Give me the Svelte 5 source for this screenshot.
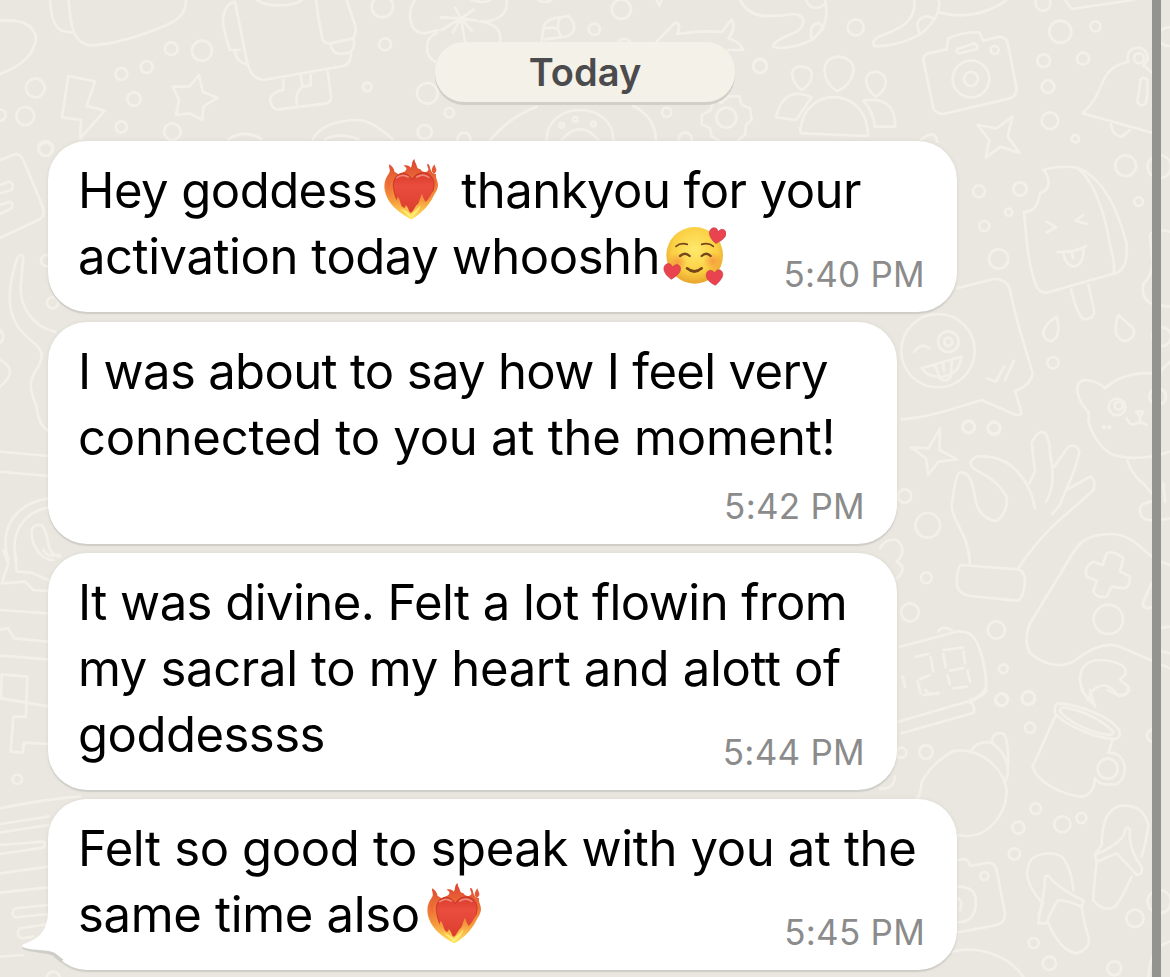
<script>
    const messages = [
        {
            size: 'wide',
            time: '5:40 PM',
            lines: [
                [{ text: 'Hey goddess', ls: -0.52 }, { icon: 'heart' }, { text: 'thankyou for your', ls: -0.54 }],
                [{ text: 'activation today whooshh', ls: -0.45 }, { icon: 'blush' }]
            ]
        },
        {
            size: 'tall',
            time: '5:42 PM',
            lines: [
                [{ text: 'I was about to say how I feel very', ls: -0.66 }],
                [{ text: 'connected to you at the moment!', ls: -0.24 }]
            ]
        },
        {
            size: 'long',
            time: '5:44 PM',
            lines: [
                [{ text: 'It was divine. Felt a lot flowin from', ls: -0.54 }],
                [{ text: 'my sacral to my heart and alott of', ls: -0.34 }],
                [{ text: 'goddessss', ls: -0.5 }]
            ]
        },
        {
            size: 'wide',
            time: '5:45 PM',
            tail: true,
            lines: [
                [{ text: 'Felt so good to speak with you at the', ls: -0.36 }],
                [{ text: 'same time also', ls: -0.33 }, { icon: 'heart' }]
            ]
        }
    ];

    // wallpaper doodles, every sheet is drawn at 3x and placed by its corner
    const sheets = [
        {
            x: 0, y: 0,
            paths: [
                'M0 62Q100 55 108 115Q100 185 0 222',
                'M150 0Q155 80 185 92L215 98',
                'M206 0C210 60 215 130 270 136C350 135 440 100 500 75Q560 50 558 0',
                'M720 150L690 150Q670 90 668 60Q675 10 705 5L740 180Q750 235 790 240L1030 198Q1055 190 1052 160',
                'M705 150Q705 185 742 193',
                'M770 0Q800 18 840 16Q890 15 905 0',
                'M948 0Q955 60 968 120Q975 132 990 130L1060 115Q1070 100 1065 75L1040 0',
                'M990 130Q995 160 1020 162L1050 158Q1068 140 1060 115',
                'M850 240V270Q815 275 810 300Q815 330 835 328L980 310Q995 305 993 290L983 215',
                'M902 228L908 260L932 256V225M908 260Q885 275 890 312',
                'M205 228L285 244L260 318L315 332L240 415L243 360L186 352Z',
                'M597 225L608 275L652 293L610 320L607 360L570 340L528 345L537 300L518 260L568 260Z',
                'M938 418Q970 360 1080 360Q1120 365 1178 418M685 418Q735 385 785 418M975 418Q1020 395 1075 418'
            ],
            dots: [[514, 146, 19], [606, 152, 30], [440, 201, 18], [364, 222, 18], [106, 264, 28], [402, 297, 20], [76, 348, 27], [0, 345, 17], [364, 381, 17], [517, 395, 25], [137, 445, 22], [1147, 20, 32], [1155, 133, 18], [1102, 261, 13]]
        },
        {
            x: 400, y: 0,
            paths: [
                'M45 0C20 35 25 100 75 100L115 90M110 100C75 110 70 165 105 185M215 0Q255 12 270 0M320 0C325 45 290 65 240 65C285 70 305 90 300 125',
                'M183 55L165 22M183 55L222 28M183 55L230 62M183 55L215 92M183 55L195 125M183 55L158 98M183 55L125 90M183 55L122 52',
                'M425 125L432 75Q445 55 480 52L505 48Q530 70 520 95Q505 112 480 112L435 118M480 52Q465 85 485 112M432 85Q460 80 475 88',
                'M770 125L825 68Q845 70 832 102Q900 90 965 96L995 58Q1010 85 985 115Q1020 125 1030 150H985',
                'M655 125Q672 108 690 125M770 0L778 18L785 0M1020 0Q1040 40 1090 50M415 0Q435 12 455 0',
                'M270 420Q330 350 410 320M700 318Q765 350 768 420M440 420C440 300 640 300 640 420M485 420Q540 355 595 420',
                'M940 300L965 308L985 290L1018 288L1025 315L1050 325L1055 360L1038 375L1035 405L1015 420M940 300L932 330L905 345L905 372L930 385L935 410L955 420'
            ],
            dots: [[664, 28, 29], [583, 88, 17], [82, 280, 31], [148, 338, 14], [74, 396, 21], [192, 418, 20], [800, 337, 14], [856, 418, 20], [979, 353, 30], [1080, 197, 21], [526, 358, 7], [580, 372, 7], [485, 376, 7]]
        },
        {
            x: 720, y: 0,
            paths: [
                'M60 0C90 60 150 50 220 42C265 45 255 85 220 100C190 112 160 125 160 140C180 150 240 138 275 120C320 85 325 40 315 0',
                'M258 0Q270 30 300 22L315 12M275 112Q265 70 300 70L310 88',
                'M583 0C590 70 530 90 475 110Q450 130 465 138C510 140 580 120 610 95C650 60 665 20 655 0M597 95C580 55 620 40 638 55M658 38Q770 65 860 0',
                'M947 0Q945 30 968 32Q995 30 990 0M1035 0L1055 27L1240 0',
                'M245 200C205 195 210 245 245 270C280 250 290 200 245 200ZM357 170C295 170 305 250 352 273C400 255 430 180 357 170ZM467 215C420 220 440 270 467 290C510 265 505 220 467 215Z',
                'M275 292Q190 255 168 352L228 360ZM248 400Q235 400 245 370C270 255 445 265 444 408ZM430 302Q525 285 526 380H465Q460 335 430 302',
                'M610 180Q610 165 625 160L680 148L685 115Q730 95 778 97L790 122L840 110Q855 112 862 125L890 265Q888 290 870 295L670 342Q645 340 640 325Z',
                'M712 148L762 130Q775 135 770 147L720 160Q704 160 712 148Z',
                'M773 375L830 385L877 350L863 410L898 458L842 440L797 473L808 420Z',
                'M1088 340C1165 270 1125 210 1225 185M1270 195L1320 240M1088 340L1320 405M1172 372Q1180 410 1205 410L1230 390M1225 185C1210 135 1285 125 1283 180L1270 198',
                'M1262 238Q1255 290 1252 305Q1260 325 1278 310Q1285 270 1282 240Q1270 228 1262 238M605 418Q645 385 652 425'
            ],
            dots: [[407, 82, 24], [120, 199, 20], [753, 237, 55], [753, 237, 21], [824, 150, 12], [1021, 95, 33], [1126, 79, 15], [971, 182, 19], [1089, 176, 18], [984, 260, 19], [990, 362, 25], [1066, 416, 11], [1257, 175, 15], [1345, 110, 28]]
        },
        {
            x: 880, y: 150,
            paths: [
                'M488 60Q590 35 630 75C690 120 720 210 740 280Q745 360 705 370L500 428Q475 428 468 405C440 330 440 260 432 185Q470 190 480 130Q510 120 505 90Q500 65 488 60Z',
                'M590 52C650 95 680 220 690 285Q708 350 700 370',
                'M573 418Q590 490 610 507Q650 510 640 470L625 405',
                'M500 215L528 231L500 248M610 195L587 212L620 222M532 306Q585 308 618 288M550 306C555 365 615 365 610 295M575 308L580 325',
                'M530 500Q490 525 490 550Q495 575 515 573Q545 560 530 500ZM715 495Q705 520 708 550Q720 575 740 573Q775 555 755 530Z',
                'M232 415L340 387Q380 385 390 420C410 520 435 590 458 670Q450 710 405 722L425 790Q415 800 395 790L305 750C210 780 130 805 65 808',
                'M103 605Q125 575 148 595M125 655L244 620Q240 670 190 680Q145 685 125 655ZM165 645L180 685Q200 700 212 680L215 635M190 642L192 665',
                'M322 685L348 695L372 650M375 690L402 632',
                'M628 820L625 785C590 750 580 700 610 690Q650 690 675 715Q730 665 815 670M675 715L690 705M740 805Q750 835 780 815L800 825M768 785H790L780 800ZM780 800V820',
                'M870 245Q820 235 810 255L815 320C825 350 805 390 790 400Q780 455 830 465L870 470M845 660L870 635'
            ],
            dots: [[737, 47, 31], [297, 124, 18], [420, 117, 20], [386, 187, 11], [313, 228, 15], [356, 327, 29], [776, 155, 13], [174, 602, 110], [205, 575, 31], [205, 575, 12], [519, 638, 17], [711, 771, 25], [716, 767, 12], [833, 740, 25], [845, 560, 28], [838, 50, 35], [266, 830, 18], [342, 833, 18]]
        },
        {
            x: 880, y: 420,
            paths: [
                'M180 25L178 90L232 118L175 125L145 165L138 115L93 82L145 85Z',
                'M465 265C450 180 390 100 290 110Q260 125 280 145C320 170 345 175 380 230C385 270 360 305 340 302Q290 285 285 230C275 175 265 155 240 157Q225 165 215 260C220 310 265 340 270 430',
                'M448 190L465 155L455 70Q470 30 495 38Q510 60 510 100C520 150 525 205 498 245M522 140L565 80Q590 70 598 95C590 150 555 210 540 255L516 283M560 210L630 170Q650 180 640 210C580 270 495 320 415 445',
                'M242 435L415 448Q435 455 435 485Q430 540 410 542L270 528Q230 520 230 485Q232 445 242 435Z',
                'M625 0Q640 65 690 100Q760 130 870 95M742 122Q760 170 790 190L815 220M815 245Q775 250 780 275Q785 305 820 300',
                'M870 435C790 415 780 350 700 342C600 340 590 380 545 455L450 610Q430 660 450 700C500 740 560 750 600 710Q680 655 730 685L870 745',
                'M680 400Q700 390 730 415L720 455L750 470Q750 500 735 505L695 500L680 530Q650 535 640 515L650 482L620 470Q610 440 640 425L668 435Z',
                'M60 680L230 635Q270 630 290 665C310 710 320 770 318 800Q305 830 270 840M175 635Q185 615 215 630',
                'M108 710L145 702M152 712L160 755M150 765L120 778M113 785L122 820M130 825L175 820M190 690L250 683M190 702L197 742M250 695L255 730M210 752L250 744M202 765L210 795M262 752L270 785M220 805L260 800M68 770L75 800',
                'M625 840C580 780 600 720 660 720Q740 725 738 760L720 780L745 800Q745 830 715 828C690 790 660 785 630 820V840',
                'M815 490L788 550Q790 570 815 562M0 385Q15 355 50 360Q85 390 50 425Q85 445 50 475M850 190L855 245M870 295L840 300M870 620L830 625Q810 655 830 690L870 700'
            ],
            dots: [[266, 22, 18], [342, 26, 19], [74, 228, 20], [143, 316, 37], [139, 473, 16], [90, 577, 27], [349, 630, 26], [370, 746, 13], [685, 598, 44], [364, 840, 18], [445, 835, 20], [672, 22, 3], [688, 22, 3]]
        },
        {
            x: 880, y: 690,
            paths: [
                'M55 95L260 35Q285 35 282 68L65 130M270 35Q315 15 320 0M135 0Q150 18 175 8M605 0L645 50L630 0M685 0Q730 30 748 0',
                'M110 325C130 310 115 280 135 260C160 220 190 200 220 183C300 170 380 240 380 310C375 380 320 440 260 438L225 435',
                'M270 188Q290 150 335 158C380 190 395 240 375 275M335 158Q340 120 372 132Q385 150 385 225',
                'M540 40C600 45 690 80 718 120Q725 150 695 147C630 140 550 100 525 70Q520 40 540 40ZM555 52C620 65 665 90 700 125Q700 138 680 134C620 125 560 90 540 65Q540 50 555 52Z',
                'M525 80L458 230C470 275 540 310 600 320Q640 320 645 265M698 150L685 188C740 185 750 260 710 282Q660 290 645 265',
                'M730 347C670 350 665 430 665 465L645 495L650 515C645 560 640 610 640 630Q670 670 705 650C730 620 740 590 755 560M730 347Q790 345 805 405Q800 450 785 500',
                'M650 515L710 490Q740 520 770 555Q790 555 785 530Q745 480 750 420Q742 405 735 420Q735 455 645 495',
                'M475 680L488 640C460 610 430 560 445 530C450 485 530 480 550 505Q575 540 580 600M505 700C520 735 545 785 590 790Q635 775 625 740Q610 690 605 650',
                'M475 700C480 650 495 620 495 560Q505 550 515 570Q560 610 612 632L605 650Q560 630 535 630Q510 665 500 700Z',
                'M235 510Q265 500 270 528L325 518Q345 520 350 540L375 670Q375 700 350 705L235 727M235 590Q290 590 288 640Q285 695 235 697M235 625Q250 635 240 660',
                'M215 785C300 765 390 800 430 861M805 861Q810 770 870 755M0 295Q40 300 45 260'
            ],
            dots: [[366, 28, 18], [445, 23, 19], [450, 113, 15], [138, 186, 20], [64, 188, 15], [683, 236, 30], [467, 356, 16], [547, 403, 24], [604, 384, 15], [415, 413, 18], [403, 492, 17], [313, 558, 12], [765, 685, 26], [461, 759, 15], [508, 820, 20], [703, 835, 21], [838, 635, 35], [820, 137, 19]]
        },
        {
            x: 0, y: 140,
            paths: [
                'M0 60L45 43Q60 40 70 60L130 205Q135 230 115 240L0 293M0 135L25 125Q45 130 35 150L0 160M0 195L30 185Q45 195 30 208L0 222',
                'M165 575C90 560 60 490 62 440L70 350Q58 338 50 360C20 450 20 530 70 580C115 625 140 625 115 680C80 730 90 750 110 800Q115 860 150 875',
                'M0 570Q20 590 0 610M0 660Q60 690 0 740M0 935L145 948M0 995L145 1008',
                'M145 1075C50 1090 -5 1160 25 1260M145 1102C60 1120 30 1190 50 1260M180 1250C130 1240 155 1190 125 1155Q95 1150 95 1180C95 1225 130 1260 160 1260'
            ],
            dots: [[137, 28, 20], [140, 362, 17], [158, 488, 17]]
        },
        {
            x: 0, y: 550,
            paths: [
                'M10 0L25 40L5 100L75 95L100 120L145 123M45 10L50 65L95 68L145 90M130 0Q145 25 180 15',
                'M0 180L145 190M0 238L25 235L42 265L145 275M0 317L145 328',
                'M5 373L82 380L78 500L40 500L32 605L68 608L72 578L145 582M5 373L3 445L150 470',
                'M0 775Q150 745 240 740M0 822L145 800M0 848L145 825M0 885L130 875Q140 880 130 893L0 912M0 970L145 950M0 1028L145 1012',
                'M145 1065L45 1075Q30 1090 45 1102L145 1092M145 1122L60 1135Q45 1155 65 1165L100 1160M0 1220L70 1215'
            ],
            dots: [[52, 688, 14], [160, 1285, 20]]
        }
    ];
</script>

{#snippet heart()}
    <svg class="heart" viewBox="45 38 170 186" aria-label="heart on fire">
        <defs>
            <linearGradient id="flame" x1="0" y1="0" x2="0" y2="1">
                <stop offset="0" stop-color="#dc4030" />
                <stop offset=".45" stop-color="#f07a38" />
                <stop offset=".8" stop-color="#fbb43c" />
                <stop offset="1" stop-color="#fde050" />
            </linearGradient>
            <linearGradient id="red" x1="0" y1="0" x2="0" y2="1">
                <stop offset="0" stop-color="#d93a2c" />
                <stop offset=".3" stop-color="#ea4d3e" />
                <stop offset="1" stop-color="#d93c2b" />
            </linearGradient>
            <linearGradient id="lick" x1="0" y1="0" x2="0" y2="1">
                <stop offset="0" stop-color="#ea5a38" />
                <stop offset=".55" stop-color="#f59a3c" />
                <stop offset="1" stop-color="#ffe85e" />
            </linearGradient>
        </defs>
        <path fill="url(#flame)" d="M129 222C98 204 65 180 54 150C43 122 50 100 63 83C68 74 61 66 63 57C72 62 78 70 79 79L91 87C102 79 111 81 114 73C117 66 111 64 106 61C117 57 124 63 128 67C134 58 129 48 139 41C139 52 146 56 147 66C151 73 157 69 160 76C167 81 177 82 180 75C183 67 174 63 178 55C187 58 184 70 190 78C191 85 200 86 204 87C200 99 212 108 209 124C207 137 199 145 195 154C181 184 154 207 129 222Z" />
        <path fill="#e65a39" d="M197 86C187 78 191 67 199 57C200 66 208 72 203 80Z" />
        <path fill="url(#red)" stroke="#b92b20" stroke-width="2" d="M129 215C108 199 80 171 76 128C70 82 115 70 132 103C148 70 198 78 198 118C195 164 154 199 129 215Z" />
        <path fill="none" stroke="#f6a18e" stroke-width="5" stroke-linecap="round" opacity=".75" d="M86 97Q102 84 120 95M146 95Q164 83 182 96" />
        <path fill="url(#lick)" d="M129 221C96 204 67 184 57 153C50 132 55 113 64 99C62 119 74 129 73 146C75 154 79 157 83 166C88 165 85 158 89 155C98 165 95 178 104 186C111 189 113 184 112 179C123 187 120 199 128 202C138 196 139 184 147 178C155 171 154 158 162 145C163 157 170 162 171 170C184 162 189 142 196 136C191 174 156 207 129 221Z" />
        <path fill="#fff27a" opacity=".8" d="M128 218C117 207 108 200 96 190C108 194 121 198 128 210C137 198 149 191 157 180C154 196 141 209 128 218Z" />
    </svg>
{/snippet}

{#snippet blush()}
    <svg class="blush" viewBox="41 33 189 180" aria-label="smiling face with hearts">
        <defs>
            <radialGradient id="face" cx=".5" cy=".4" r=".6">
                <stop offset="0" stop-color="#ffe96c" />
                <stop offset=".65" stop-color="#fbd044" />
                <stop offset="1" stop-color="#e9a42e" />
            </radialGradient>
            <radialGradient id="cheek">
                <stop offset="0" stop-color="#f58b3f" stop-opacity=".75" />
                <stop offset="1" stop-color="#f58b3f" stop-opacity="0" />
            </radialGradient>
            <path id="love" d="M0 25C-13 18 -26 5 -25 -8C-22 -25 -4 -25 1 -11C8 -27 26 -21 25 -6C24 7 10 17 0 25Z" />
        </defs>
        <circle cx="136" cy="121" r="85" fill="url(#face)" />
        <circle cx="84" cy="142" r="28" fill="url(#cheek)" />
        <circle cx="190" cy="138" r="28" fill="url(#cheek)" />
        <g fill="none" stroke="#74451b" stroke-width="7" stroke-linecap="round">
            <path d="M80 94Q94 82 114 88M157 88Q178 82 192 94" stroke-width="5" />
            <path d="M92 123Q107 110 121 123M157 123Q171 110 184 123" />
            <path d="M113 160Q135 179 157 160" stroke-width="8" />
        </g>
        <g fill="#e8434f" stroke="#bd3040" stroke-width="1.5">
            <use href="#love" transform="translate(204 61) rotate(10)" />
            <use href="#love" transform="translate(68 168) rotate(5)" />
            <use href="#love" transform="translate(196 186) rotate(-5)" />
        </g>
    </svg>
{/snippet}

<div class="page">
    <svg class="wallpaper" viewBox="0 0 1170 977" aria-hidden="true">
        {#each sheets as s}
            <g transform="translate({s.x} {s.y}) scale(.33333)">
                {#each s.paths as d}
                    <path {d} />
                {/each}
                {#each s.dots as [cx, cy, r]}
                    <circle {cx} {cy} {r} />
                {/each}
            </g>
        {/each}
    </svg>

    <main class="chat">
        <div class="day">Today</div>
        {#each messages as m}
            <div class="bubble {m.size}">
                {#if m.tail}
                    <svg class="tail" viewBox="0 0 60 62">
                        <path class="shade" d="M1 46C12 51 25 49 32 53L40 60" />
                        <path d="M26 4C27 30 18 37 2 43C-1 44 0 46 3 47C14 50 25 48 33 52L42 59H58V4Z" />
                    </svg>
                {/if}
                <div class="text">
                    {#each m.lines as line}
                        <div class="line">
                            {#each line as part}
                                {#if part.icon === 'heart'}
                                    {@render heart()}
                                {:else if part.icon === 'blush'}
                                    {@render blush()}
                                {:else}
                                    <span style="letter-spacing: {part.ls}px">{part.text}</span>
                                {/if}
                            {/each}
                        </div>
                    {/each}
                </div>
                <time>{m.time}</time>
            </div>
        {/each}
    </main>
    <div class="edge"></div>
</div>

<style>
    :global(body) {
        background: #e9e7e0;
    }

    .page {
        position: relative;
        display: flex;
        justify-content: space-between;
        width: 1170px;
        height: 977px;
        overflow: hidden;
        background: #e9e7e0;
        font-family: Inter, "Liberation Sans", sans-serif;
    }

    .wallpaper {
        position: absolute;
        inset: 0;
        width: 1170px;
        height: 977px;
        fill: none;
        stroke: #f3f0ea;
        stroke-width: 8;
        stroke-linejoin: round;
        stroke-linecap: round;
    }

    .chat {
        position: relative;
        display: flex;
        flex-direction: column;
        align-items: flex-start;
        gap: 9px;
        width: 1074px;
        padding: 42px 0 0 48px;
    }

    .day {
        box-sizing: border-box;
        width: 300px;
        height: 60px;
        margin: 0 0 30px 387px;
        border-radius: 29px;
        background: #f4f1e8;
        box-shadow: 0 3px 0 #d2cfc8;
        color: #4b4b4d;
        font-size: 38px;
        font-weight: 600;
        line-height: 61px;
        text-align: center;
    }

    .bubble {
        position: relative;
        box-sizing: border-box;
        display: grid;
        padding: 17px 32px 20px 30px;
        border-radius: 39px;
        background: #fff;
        box-shadow: 0 2px 1px #cfcdc7, 0 0 5px rgba(0, 0, 0, 0.06);
    }

    .wide {
        width: 909px;
        height: 171px;
    }

    .tall {
        width: 849px;
        height: 222px;
        margin-top: 1px;
    }

    .long {
        width: 849px;
        height: 237px;
    }

    .text,
    time {
        position: relative;
        grid-area: 1 / 1;
    }

    .line {
        display: flex;
        align-items: center;
        height: 66px;
        color: #000;
        font-size: 49px;
        line-height: 66px;
        white-space: pre;
    }

    time {
        align-self: end;
        justify-self: end;
        color: #8b8b8b;
        font-size: 35px;
        letter-spacing: 0.25px;
        line-height: 36px;
    }

    .heart {
        width: 57px;
        height: 62px;
        margin: 0 21px 4px 6px;
    }

    .blush {
        width: 63px;
        height: 60px;
        margin: 0 0 2px 3px;
    }

    .tail {
        position: absolute;
        left: -26px;
        bottom: 7px;
        width: 60px;
        height: 62px;
        fill: #fff;
    }

    .shade {
        fill: none;
        stroke: #cfcdc7;
        stroke-width: 4;
    }

    .edge {
        position: relative;
        width: 9px;
        margin-right: 9px;
        background: rgba(143, 144, 139, 0.96);
    }
</style>
